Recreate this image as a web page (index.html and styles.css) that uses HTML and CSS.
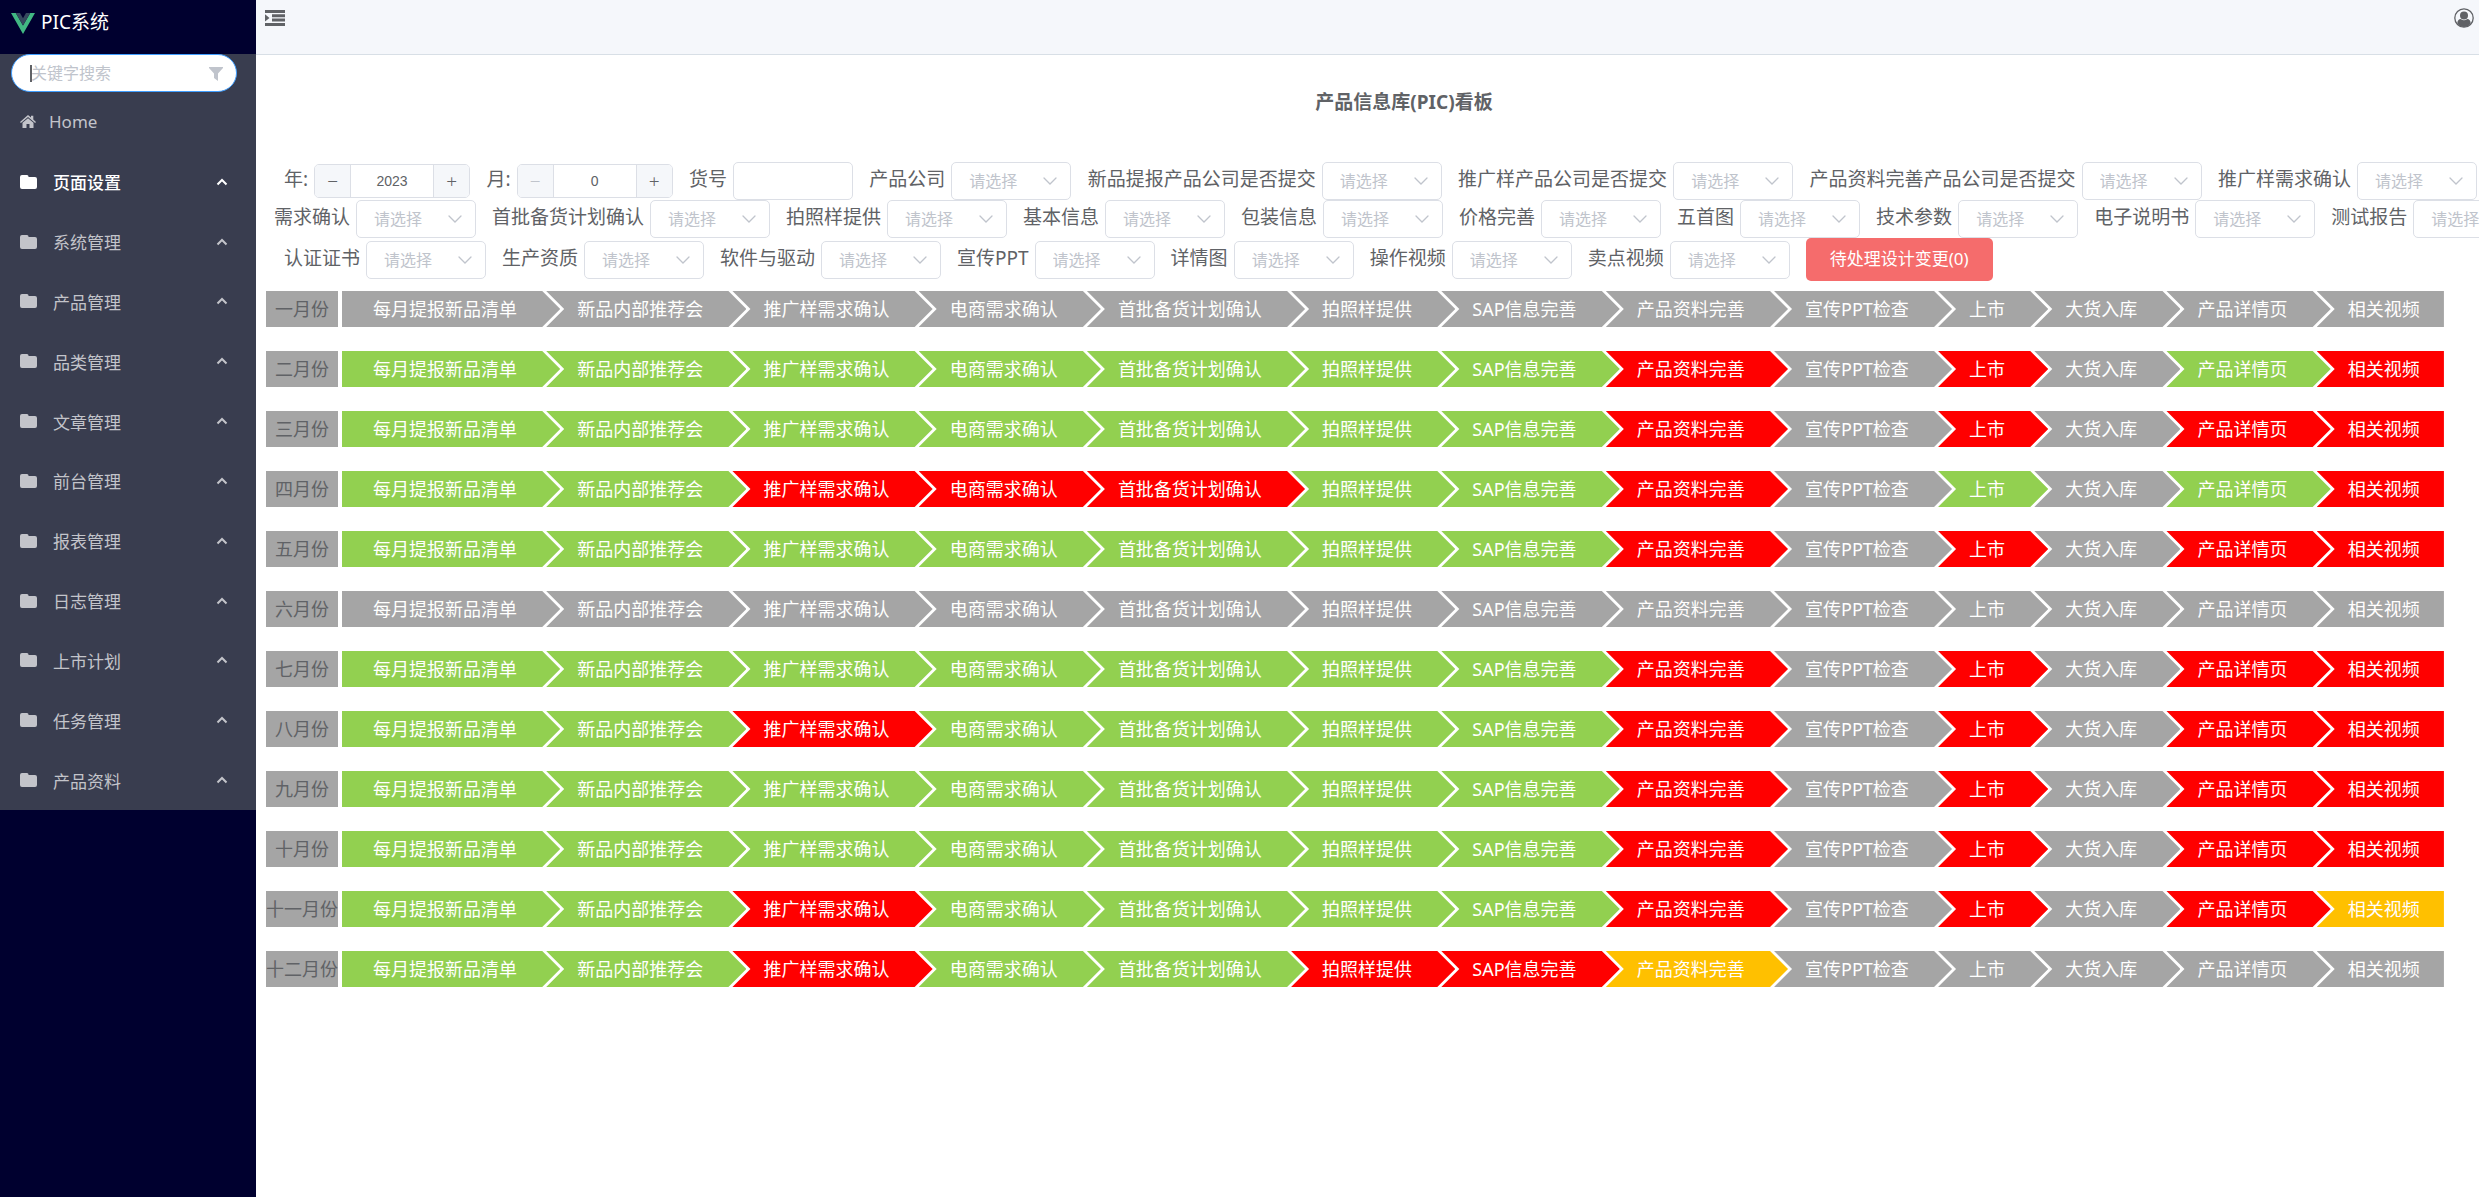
FILE: index.html
```html
<!DOCTYPE html>
<html lang="zh-CN">
<head>
<meta charset="utf-8">
<title>PIC系统</title>
<link rel="stylesheet" href="styles.css">
</head>
<body>
<svg class="sprite" aria-hidden="true">
  <symbol id="i-down" viewBox="0 0 14 8"><path d="M1 1l6 6 6-6" fill="none" stroke="currentColor" stroke-width="1.3" stroke-linecap="round"/></symbol>
  <symbol id="i-up" viewBox="0 0 12 8"><path d="M1.500 6.500L6 2l4.500 4.500" fill="none" stroke="currentColor" stroke-width="2"/></symbol>
  <symbol id="i-folder" viewBox="0 0 17 14"><path d="M2 0h5q1.500 0 1.500 1.500V2H15q2 0 2 2v8q0 2-2 2H2q-2 0-2-2V2q0-2 2-2z" fill="currentColor"/></symbol>
</svg>
<div class="app">
  <aside class="sidebar">
    <div class="brand">
      <svg width="24" height="21" viewBox="0 0 24 21" aria-hidden="true"><path d="M0 0h4.800L12 12.500 19.200 0H24L12 21z" fill="#41b883"/><path d="M4.800 0H9l3 5.200L15 0h4.200L12 12.500z" fill="#35495e"/></svg>
      <span>PIC系统</span>
    </div>
    <nav class="menu">
      <div class="search">
        <input type="text" placeholder="关键字搜索" aria-label="关键字搜索">
        <i class="caret"></i>
        <svg class="funnel" width="14" height="14" viewBox="0 0 14 14" aria-hidden="true"><path d="M0 0h14v1L9 6.500V14l-4-3V6.500L0 1z" fill="#c0c4cc"/></svg>
      </div>
      <a class="home" href="#"><svg width="16" height="13" viewBox="0 0 16 13" aria-hidden="true"><path d="M8 0l3 2.600V.8h2.300v3.800L16 7l-.9 1L8 2 .9 8 0 7z" fill="currentColor"/><path d="M8 3.200l5.500 4.600V13H9.500V9h-3v4h-4V7.800z" fill="currentColor"/></svg>Home</a>
      <a class="item active" href="#"><svg class="folder"><use href="#i-folder"/></svg>页面设置<svg class="up"><use href="#i-up"/></svg></a>
      <a class="item" href="#"><svg class="folder"><use href="#i-folder"/></svg>系统管理<svg class="up"><use href="#i-up"/></svg></a>
      <a class="item" href="#"><svg class="folder"><use href="#i-folder"/></svg>产品管理<svg class="up"><use href="#i-up"/></svg></a>
      <a class="item" href="#"><svg class="folder"><use href="#i-folder"/></svg>品类管理<svg class="up"><use href="#i-up"/></svg></a>
      <a class="item" href="#"><svg class="folder"><use href="#i-folder"/></svg>文章管理<svg class="up"><use href="#i-up"/></svg></a>
      <a class="item" href="#"><svg class="folder"><use href="#i-folder"/></svg>前台管理<svg class="up"><use href="#i-up"/></svg></a>
      <a class="item" href="#"><svg class="folder"><use href="#i-folder"/></svg>报表管理<svg class="up"><use href="#i-up"/></svg></a>
      <a class="item" href="#"><svg class="folder"><use href="#i-folder"/></svg>日志管理<svg class="up"><use href="#i-up"/></svg></a>
      <a class="item" href="#"><svg class="folder"><use href="#i-folder"/></svg>上市计划<svg class="up"><use href="#i-up"/></svg></a>
      <a class="item" href="#"><svg class="folder"><use href="#i-folder"/></svg>任务管理<svg class="up"><use href="#i-up"/></svg></a>
      <a class="item" href="#"><svg class="folder"><use href="#i-folder"/></svg>产品资料<svg class="up"><use href="#i-up"/></svg></a>
    </nav>
  </aside>
  <div class="page">
    <header class="topbar">
      <button class="icon-btn" aria-label="折叠菜单"><svg width="20" height="16" viewBox="0 0 20 16"><path d="M0 0h20v3H0zM7 4.300h13v3H7zM7 8.600h13v3H7zM0 13h20v3H0zM0 4.300L4.500 8 0 11.600z" fill="#606266"/></svg></button>
      <button class="icon-btn" aria-label="用户"><svg width="20" height="20" viewBox="0 0 20 20"><circle cx="10" cy="10" r="9.200" fill="none" stroke="#606266" stroke-width="1.300"/><circle cx="10" cy="7.400" r="4" fill="#606266"/><path d="M3.300 15.500Q3.500 11 6.800 11q1.400 1.300 3.200 1.300T13.200 11q3.300 0 3.500 4.500Q14 19 10 19t-6.700-3.500z" fill="#606266"/></svg></button>
    </header>
    <main>
      <h1>产品信息库(PIC)看板</h1>
      <form class="filters">
        <div class="row fill">
          <div class="field"><label for="year">年:</label><span class="number"><button type="button" aria-label="减少年份">−</button><input id="year" type="text" value="2023"><button type="button" aria-label="增加年份">+</button></span></div>
          <div class="field"><label for="month">月:</label><span class="number"><button type="button" disabled aria-label="减少月份">−</button><input id="month" type="text" value="0"><button type="button" aria-label="增加月份">+</button></span></div>
          <div class="field"><label for="sku">货号</label><input class="text" id="sku" type="text"></div>
          <div class="field"><label for="s1">产品公司</label><span class="select"><select id="s1"><option>请选择</option></select><svg><use href="#i-down"/></svg></span></div>
          <div class="field"><label for="s2">新品提报产品公司是否提交</label><span class="select"><select id="s2"><option>请选择</option></select><svg><use href="#i-down"/></svg></span></div>
          <div class="field"><label for="s3">推广样产品公司是否提交</label><span class="select"><select id="s3"><option>请选择</option></select><svg><use href="#i-down"/></svg></span></div>
          <div class="field"><label for="s4">产品资料完善产品公司是否提交</label><span class="select"><select id="s4"><option>请选择</option></select><svg><use href="#i-down"/></svg></span></div>
          <div class="field"><label for="s5">推广样需求确认</label><span class="select"><select id="s5"><option>请选择</option></select><svg><use href="#i-down"/></svg></span></div>
        </div>
        <div class="row continued">
          <div class="field"><label for="s6">需求确认</label><span class="select"><select id="s6"><option>请选择</option></select><svg><use href="#i-down"/></svg></span></div>
          <div class="field"><label for="s7">首批备货计划确认</label><span class="select"><select id="s7"><option>请选择</option></select><svg><use href="#i-down"/></svg></span></div>
          <div class="field"><label for="s8">拍照样提供</label><span class="select"><select id="s8"><option>请选择</option></select><svg><use href="#i-down"/></svg></span></div>
          <div class="field"><label for="s9">基本信息</label><span class="select"><select id="s9"><option>请选择</option></select><svg><use href="#i-down"/></svg></span></div>
          <div class="field"><label for="s10">包装信息</label><span class="select"><select id="s10"><option>请选择</option></select><svg><use href="#i-down"/></svg></span></div>
          <div class="field"><label for="s11">价格完善</label><span class="select"><select id="s11"><option>请选择</option></select><svg><use href="#i-down"/></svg></span></div>
          <div class="field"><label for="s12">五首图</label><span class="select"><select id="s12"><option>请选择</option></select><svg><use href="#i-down"/></svg></span></div>
          <div class="field"><label for="s13">技术参数</label><span class="select"><select id="s13"><option>请选择</option></select><svg><use href="#i-down"/></svg></span></div>
          <div class="field"><label for="s14">电子说明书</label><span class="select"><select id="s14"><option>请选择</option></select><svg><use href="#i-down"/></svg></span></div>
          <div class="field"><label for="s15">测试报告</label><span class="select"><select id="s15"><option>请选择</option></select><svg><use href="#i-down"/></svg></span></div>
        </div>
        <div class="row">
          <div class="field"><label for="s16">认证证书</label><span class="select"><select id="s16"><option>请选择</option></select><svg><use href="#i-down"/></svg></span></div>
          <div class="field"><label for="s17">生产资质</label><span class="select"><select id="s17"><option>请选择</option></select><svg><use href="#i-down"/></svg></span></div>
          <div class="field"><label for="s18">软件与驱动</label><span class="select"><select id="s18"><option>请选择</option></select><svg><use href="#i-down"/></svg></span></div>
          <div class="field"><label for="s19">宣传PPT</label><span class="select"><select id="s19"><option>请选择</option></select><svg><use href="#i-down"/></svg></span></div>
          <div class="field"><label for="s20">详情图</label><span class="select"><select id="s20"><option>请选择</option></select><svg><use href="#i-down"/></svg></span></div>
          <div class="field"><label for="s21">操作视频</label><span class="select"><select id="s21"><option>请选择</option></select><svg><use href="#i-down"/></svg></span></div>
          <div class="field"><label for="s22">卖点视频</label><span class="select"><select id="s22"><option>请选择</option></select><svg><use href="#i-down"/></svg></span></div>
          <button type="button" class="danger">待处理设计变更(0)</button>
        </div>
      </form>
      <section class="board" id="board"></section>
    </main>
  </div>
</div>
<script src="board.js"></script>
</body>
</html>
```
FILE: board.js
```js
// One letter per step: n = not started, d = done, l = late, w = warning.
const steps = ['每月提报新品清单', '新品内部推荐会', '推广样需求确认', '电商需求确认', '首批备货计划确认', '拍照样提供', 'SAP信息完善', '产品资料完善', '宣传PPT检查', '上市', '大货入库', '产品详情页', '相关视频'];
const months = [
  ['一月份', 'nnnnnnnnnnnnn'],
  ['二月份', 'dddddddlnlndl'],
  ['三月份', 'dddddddlnlnll'],
  ['四月份', 'ddlllddlndndl'],
  ['五月份', 'dddddddlnlnll'],
  ['六月份', 'nnnnnnnnnnnnn'],
  ['七月份', 'dddddddlnlnll'],
  ['八月份', 'ddlddddlnlnll'],
  ['九月份', 'dddddddlnlnll'],
  ['十月份', 'dddddddlnlnll'],
  ['十一月份', 'ddlddddlnlnlw'],
  ['十二月份', 'ddlddllwnnnnn']
];
const names = { n: 'pending', d: 'done', l: 'late', w: 'warning' };
document.getElementById('board').innerHTML = months.map(([label, state]) =>
  `<div class="month"><h2>${label}</h2><ol>${steps.map((s, i) => `<li class="${names[state[i]]}">${s}</li>`).join('')}</ol></div>`
).join('');
```
FILE: styles.css
```css
* { box-sizing: border-box; }
body {
  margin: 0;
  font-family: "Noto Sans", "Noto Sans CJK SC", sans-serif;
  font-size: 19px;
  color: #606266;
  background: #fff;
}
input, select, button { font-family: inherit; color: inherit; margin: 0; }
a { text-decoration: none; color: inherit; }
.sprite { display: none; }
.app { display: flex; min-height: 100vh; }

.sidebar { flex: 0 0 256px; background: #00002f; }
.brand {
  display: flex;
  gap: 6px;
  height: 54px;
  padding: 8px 11px;
  color: #fff;
  line-height: 28px;
}
.brand svg { margin-top: 5px; }
.menu {
  display: flex;
  flex-direction: column;
  min-height: 756px;
  background: #393d4f;
  color: #c3c4ca;
  font-size: 17px;
}
.search { position: relative; flex: none; margin: 0 19px 0 11px; height: 38px; }
.search input {
  width: 100%;
  height: 38px;
  padding: 0 40px 0 19px;
  border: 1px solid #409eff;
  border-radius: 19px;
  background: #fff;
  font-size: 16px;
  outline: none;
}
.search input::placeholder { color: #c0c4cc; }
.caret { position: absolute; left: 19px; top: 11px; width: 2px; height: 17px; background: #606266; }
.funnel { position: absolute; right: 14px; top: 13px; }
.home, .item { display: flex; flex: 1 0 56px; align-items: center; padding: 0 28px 0 20px; }
.home { gap: 13px; }
.item { gap: 16px; }
.item.active { color: #fff; font-weight: 500; }
.folder { width: 17px; height: 14px; }
.up { width: 12px; height: 8px; margin-left: auto; }

.page { flex: 1; min-width: 0; overflow: hidden; }
.topbar {
  display: flex;
  justify-content: space-between;
  align-items: flex-start;
  height: 55px;
  padding: 8px 5px 0 9px;
  background: #f5f7fb;
  border-bottom: 1px solid #d8dfe6;
}
.icon-btn { display: flex; padding: 0; border: 0; background: none; height: 20px; align-items: center; }
h1 {
  margin: 33px 0 46px;
  padding-left: 73px;
  text-align: center;
  font-size: 19px;
  line-height: 28px;
  font-weight: 700;
}

.filters { display: flex; flex-direction: column; }
.row { display: flex; align-items: center; gap: 16px; padding: 0 2px 0 28px; height: 38px; }
.row.fill { gap: 0; justify-content: space-between; }
.row.continued { padding-left: 18px; }
.row:last-child { height: 43px; }
.field { display: flex; flex: none; align-items: center; gap: 6px; }
.field label { line-height: 28px; padding-bottom: 4px; white-space: nowrap; }
.text, .select, .number {
  display: flex;
  width: 120px;
  height: 38px;
  border: 1px solid #dcdfe6;
  border-radius: 5px;
  background: #fff;
}
.text { padding: 0 16px; font-size: 16px; }
.number { width: 156px; height: 34px; overflow: hidden; }
.number button {
  flex: 0 0 35px;
  padding: 0;
  border: 0;
  background: #f5f7fa;
  font-weight: 300;
  font-size: 19px;
}
.number button:disabled { color: #c0c4cc; }
.number input {
  flex: 1;
  min-width: 0;
  padding: 0;
  border: solid #dcdfe6;
  border-width: 0 1px;
  text-align: center;
  font-family: "Liberation Sans", sans-serif;
  font-size: 14px;
}
.select { position: relative; }
.select select {
  width: 100%;
  height: 36px;
  padding: 0 34px 0 17px;
  border: 0;
  background: none;
  appearance: none;
  font-size: 16px;
  color: #c0c4cc;
}
.select svg { position: absolute; right: 13px; top: 14px; width: 14px; height: 8px; color: #c0c4cc; pointer-events: none; }
.danger {
  height: 43px;
  padding: 0 24px 4px;
  border: 0;
  border-radius: 5px;
  background: #f56c6c;
  color: #fff;
  font-size: 17px;
  white-space: nowrap;
}

.board { display: flex; flex-direction: column; gap: 24px; padding: 10px 35px 10px 10px; }
.month { display: flex; gap: 4px; font-size: 18px; line-height: 36px; white-space: nowrap; }
.month h2 {
  flex: 0 0 72px;
  margin: 0;
  background: #a5a5a5;
  text-align: center;
  font-size: 18px;
  font-weight: 400;
}
.month ol { display: flex; flex: 1; margin: 0; padding: 0; list-style: none; color: #fff; }
.month li {
  flex: 1 0 auto;
  margin-right: -14px;
  padding: 0 43px 0 31px;
  clip-path: polygon(0 0, calc(100% - 18px) 0, 100% 50%, calc(100% - 18px) 100%, 0 100%, 18px 50%);
}
.month li:first-child { clip-path: polygon(0 0, calc(100% - 18px) 0, 100% 50%, calc(100% - 18px) 100%, 0 100%); }
.month li:last-child { margin: 0; padding-right: 24px; clip-path: polygon(0 0, 100% 0, 100% 100%, 0 100%, 18px 50%); }
.pending { background: #a5a5a5; }
.done { background: #92d050; }
.late { background: #f00; }
.warning { background: #ffc000; }
```
